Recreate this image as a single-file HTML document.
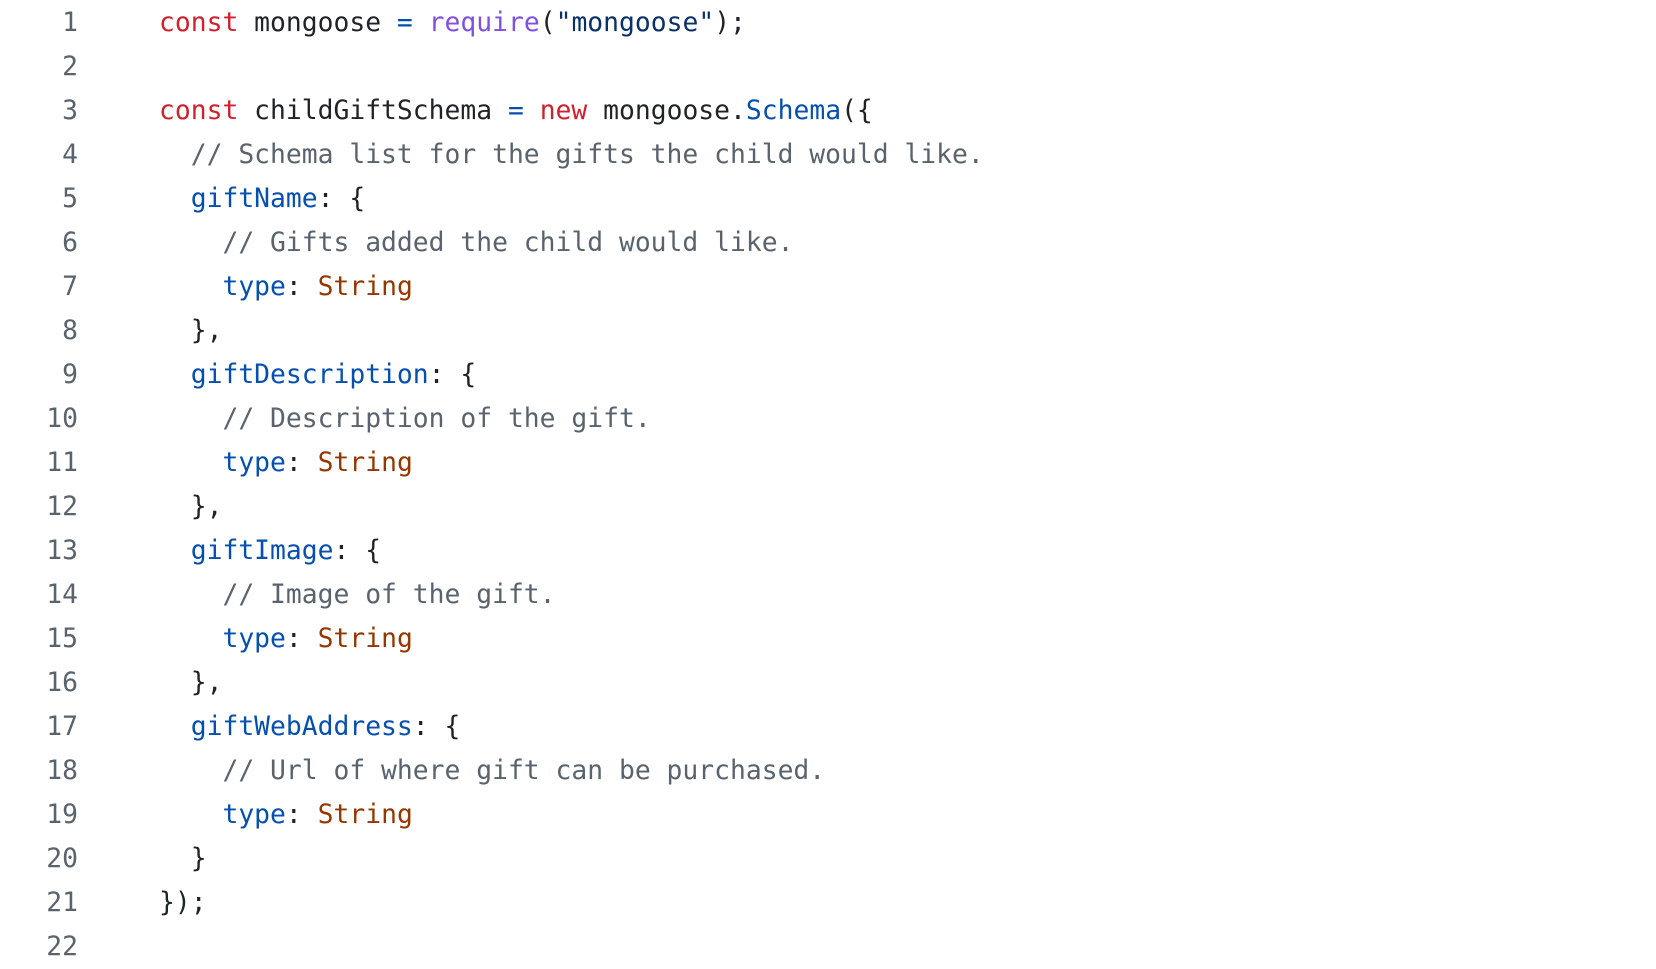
<!DOCTYPE html>
<html><head><style>
html,body{margin:0;padding:0;background:#fff;width:1656px;height:952px;overflow:hidden}
.w{position:absolute;top:1px;left:0;font-family:"DejaVu Sans Mono","Liberation Mono",monospace;font-size:26.35px;line-height:44px;color:#1f2328}
.r{height:44px;position:relative}
.n{position:absolute;left:18px;width:60px;color:#59636e;text-align:right}
.c{position:absolute;left:159px;white-space:pre}
.k{color:#cf222e}.f{color:#8250df}.s{color:#0a3069}.p{color:#0550ae}.m{color:#59636e}.t{color:#953800}
</style></head><body><div class="w"><div class="r"><span class="n">1</span><span class="c"><span class="k">const</span> mongoose <span class="p">=</span> <span class="f">require</span>(<span class="s">"mongoose"</span>);</span></div><div class="r"><span class="n">2</span></div><div class="r"><span class="n">3</span><span class="c"><span class="k">const</span> childGiftSchema <span class="p">=</span> <span class="k">new</span> mongoose.<span class="p">Schema</span>({</span></div><div class="r"><span class="n">4</span><span class="c">  <span class="m">// Schema list for the gifts the child would like.</span></span></div><div class="r"><span class="n">5</span><span class="c">  <span class="p">giftName</span>: {</span></div><div class="r"><span class="n">6</span><span class="c">    <span class="m">// Gifts added the child would like.</span></span></div><div class="r"><span class="n">7</span><span class="c">    <span class="p">type</span>: <span class="t">String</span></span></div><div class="r"><span class="n">8</span><span class="c">  },</span></div><div class="r"><span class="n">9</span><span class="c">  <span class="p">giftDescription</span>: {</span></div><div class="r"><span class="n">10</span><span class="c">    <span class="m">// Description of the gift.</span></span></div><div class="r"><span class="n">11</span><span class="c">    <span class="p">type</span>: <span class="t">String</span></span></div><div class="r"><span class="n">12</span><span class="c">  },</span></div><div class="r"><span class="n">13</span><span class="c">  <span class="p">giftImage</span>: {</span></div><div class="r"><span class="n">14</span><span class="c">    <span class="m">// Image of the gift.</span></span></div><div class="r"><span class="n">15</span><span class="c">    <span class="p">type</span>: <span class="t">String</span></span></div><div class="r"><span class="n">16</span><span class="c">  },</span></div><div class="r"><span class="n">17</span><span class="c">  <span class="p">giftWebAddress</span>: {</span></div><div class="r"><span class="n">18</span><span class="c">    <span class="m">// Url of where gift can be purchased.</span></span></div><div class="r"><span class="n">19</span><span class="c">    <span class="p">type</span>: <span class="t">String</span></span></div><div class="r"><span class="n">20</span><span class="c">  }</span></div><div class="r"><span class="n">21</span><span class="c">});</span></div><div class="r"><span class="n">22</span></div></div></body></html>
